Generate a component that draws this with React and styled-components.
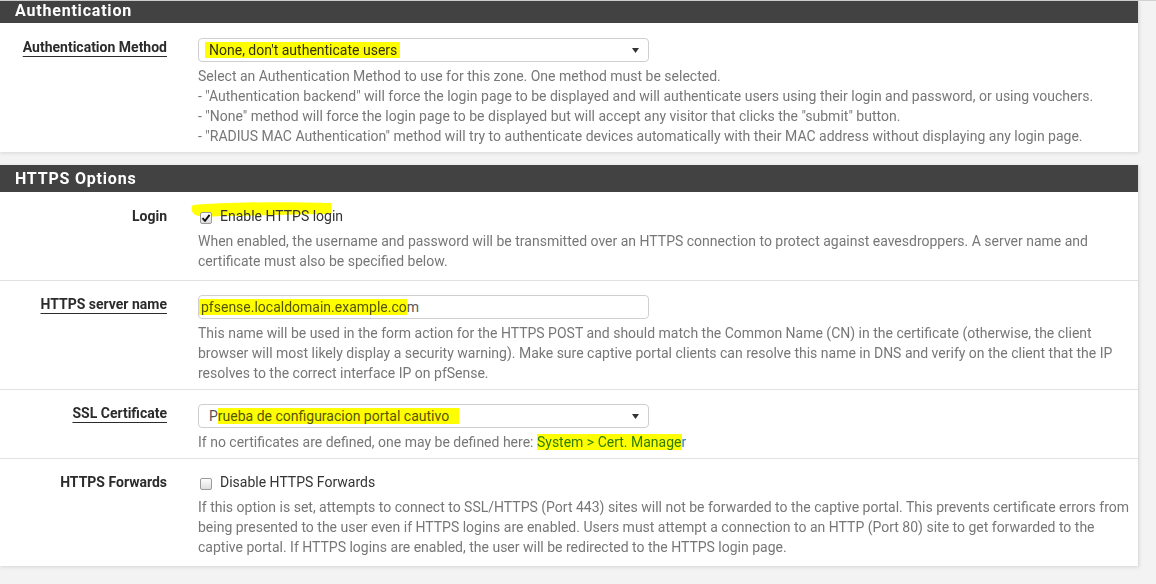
import styled, { createGlobalStyle } from "styled-components";

const Global = createGlobalStyle`
  html, body { margin: 0; padding: 0; background: #f3f3f3; }
  body { font-family: Roboto, "Liberation Sans", sans-serif; font-size: 14px; color: #333; }
`;

export default function App() {
  return (
    <Page>
      <Global />
      <Panel>
        <Heading $clip>Authentication</Heading>
        <Row $pb="6px">
          <Label $required>Authentication Method</Label>
          <Control>
            <SelectBox>
              <Mark $pad="0 3px 0 4px" $ml="-4px">None, don't authenticate users</Mark>
              <Arrow />
            </SelectBox>
            <Help>
              Select an Authentication Method to use for this zone. One method must be selected.<br />
              - "Authentication backend" will force the login page to be displayed and will authenticate users using their login and password, or using vouchers.<br />
              - "None" method will force the login page to be displayed but will accept any visitor that clicks the "submit" button.<br />
              - "RADIUS MAC Authentication" method will try to authenticate devices automatically with their MAC address without displaying any login page.
            </Help>
          </Control>
        </Row>
      </Panel>

      <Panel>
        <Heading>HTTPS Options</Heading>
        <Row $pb="9px">
          <Label>Login</Label>
          <Control>
            <CheckLine>
              <Stroke viewBox="0 0 142 18" preserveAspectRatio="none">
                <path d="M3 4 C 30 2, 80 0, 141 2 L 142 13 C 110 13, 60 15, 30 15 C 18 16, 8 16, 4 13 C 1 10, 1 6, 3 4 Z" fill="#ffff00" />
              </Stroke>
              <Box $checked>
                <svg width="10" height="10" viewBox="0 0 10 10">
                  <path d="M1.5 5.2 L4 7.8 L8.6 1.8" fill="none" stroke="#111" strokeWidth="1.9" />
                </svg>
              </Box>
              <CheckText>Enable HTTPS login</CheckText>
            </CheckLine>
            <Help $mt="5px">
              When enabled, the username and password will be transmitted over an HTTPS connection to protect against eavesdroppers. A server name and<br />
              certificate must also be specified below.
            </Help>
          </Control>
        </Row>

        <Row $pb="6px">
          <Label $required>HTTPS server name</Label>
          <Control>
            <TextBox>
              <Mark $pad="0 0 0 2px" $ml="-2px">pfsense.localdomain.example.co</Mark>m
            </TextBox>
            <Help>
              This name will be used in the form action for the HTTPS POST and should match the Common Name (CN) in the certificate (otherwise, the client<br />
              browser will most likely display a security warning). Make sure captive portal clients can resolve this name in DNS and verify on the client that the IP<br />
              resolves to the correct interface IP on pfSense.
            </Help>
          </Control>
        </Row>

        <Row $pb="6px">
          <Label $required>SSL Certificate</Label>
          <Control>
            <SelectBox $muted>
              P<Mark $pad="0 10px 0 0">rueba de configuracion portal cautivo</Mark>
              <Arrow />
            </SelectBox>
            <Help>
              If no certificates are defined, one may be defined here:{" "}
              <Link><Mark>System &gt; Cert. Manage</Mark>r</Link>
            </Help>
          </Control>
        </Row>

        <Row $pb="9px">
          <Label>HTTPS Forwards</Label>
          <Control>
            <CheckLine>
              <Box />
              <CheckText>Disable HTTPS Forwards</CheckText>
            </CheckLine>
            <Help $mt="5px">
              If this option is set, attempts to connect to SSL/HTTPS (Port 443) sites will not be forwarded to the captive portal. This prevents certificate errors from<br />
              being presented to the user even if HTTPS logins are enabled. Users must attempt a connection to an HTTP (Port 80) site to get forwarded to the<br />
              captive portal. If HTTPS logins are enabled, the user will be redirected to the HTTPS login page.
            </Help>
          </Control>
        </Row>
      </Panel>
    </Page>
  );
}

function Arrow() {
  return (
    <ArrowIcon width="7" height="5" viewBox="0 0 7 5">
      <polygon points="0,0 7,0 3.5,5" fill="#333" />
    </ArrowIcon>
  );
}

const Page = styled.div`
  width: 1156px;
  min-height: 584px;
  box-sizing: border-box;
  border-top: 1px solid #d2d2d2;
  padding-right: 17px;
  display: flex;
  flex-direction: column;
  gap: 13px;
`;

const Panel = styled.section`
  background: #fff;
  border-right: 1px solid #dcdcdc;
  box-shadow: 0 1px 4px rgba(0, 0, 0, 0.12);
`;

const Heading = styled.h2`
  margin: 0;
  box-sizing: border-box;
  height: ${({ $clip }) => ($clip ? "22px" : "27px")};
  padding: ${({ $clip }) => ($clip ? "0 15px 4px" : "0 15px")};
  display: flex;
  align-items: center;
  background: #424242;
  color: #fff;
  font-size: 16px;
  font-weight: bold;
  letter-spacing: 0.8px;
`;

const Row = styled.div`
  display: grid;
  grid-template-columns: 183px 1fr;
  padding: 14px 0 ${({ $pb }) => $pb};

  & + & {
    border-top: 1px solid #e2e2e2;
    padding-top: 13px;
  }
`;

const Label = styled.div`
  text-align: right;
  padding-right: 16px;
  line-height: 20px;
  font-weight: bold;
  color: #2b2b2b;
  white-space: nowrap;
  text-decoration: ${({ $required }) => ($required ? "underline" : "none")};
  text-decoration-thickness: 1px;
  text-underline-offset: 4px;
`;

const Control = styled.div`
  padding-left: 15px;
  display: flex;
  flex-direction: column;
  align-items: flex-start;
`;

const SelectBox = styled.div`
  position: relative;
  box-sizing: border-box;
  width: 451px;
  height: 24px;
  margin-top: 1px;
  padding: 0 10px;
  display: flex;
  align-items: center;
  border: 1px solid #cfcfcf;
  border-radius: 4px;
  background: #fff;
  color: ${({ $muted }) => ($muted ? "#555" : "#333")};
  font-size: 14px;
  white-space: nowrap;
`;

const TextBox = styled(SelectBox)`
  padding: 0 2px;
  color: #555;
`;

const ArrowIcon = styled.svg`
  position: absolute;
  right: 9px;
  top: 9px;
`;

/* highlighter pen: a yellow layer multiplied over the text */
const Mark = styled.span`
  position: relative;
  display: inline-block;
  padding: ${({ $pad }) => $pad || "0"};
  margin-left: ${({ $ml }) => $ml || "0"};
  line-height: 16px;

  &::after {
    content: "";
    position: absolute;
    inset: 0;
    background: #ffff00;
    mix-blend-mode: multiply;
    pointer-events: none;
  }
`;

const Help = styled.p`
  margin: ${({ $mt }) => $mt || "4px"} 0 0;
  line-height: 20px;
  color: #777;
  font-size: 14px;
  white-space: nowrap;
`;

const Link = styled.a`
  color: #317cb9;
  cursor: pointer;
`;

const CheckLine = styled.div`
  position: relative;
  height: 20px;
  display: flex;
  align-items: center;
  gap: 8px;
  padding-left: 2px;
`;

const Stroke = styled.svg`
  position: absolute;
  left: -8px;
  top: -5px;
  width: 142px;
  height: 18px;
  z-index: 0;
`;

const Box = styled.span`
  position: relative;
  z-index: 1;
  box-sizing: border-box;
  width: 12px;
  height: 12px;
  margin-top: 3px;
  display: flex;
  align-items: center;
  justify-content: center;
  border: 1px solid #9a9a9a;
  border-radius: 2px;
  background: linear-gradient(#fdfdfd, #dedede);
`;

const CheckText = styled.span`
  position: relative;
  z-index: 1;
  color: #333;
  line-height: 20px;
`;
